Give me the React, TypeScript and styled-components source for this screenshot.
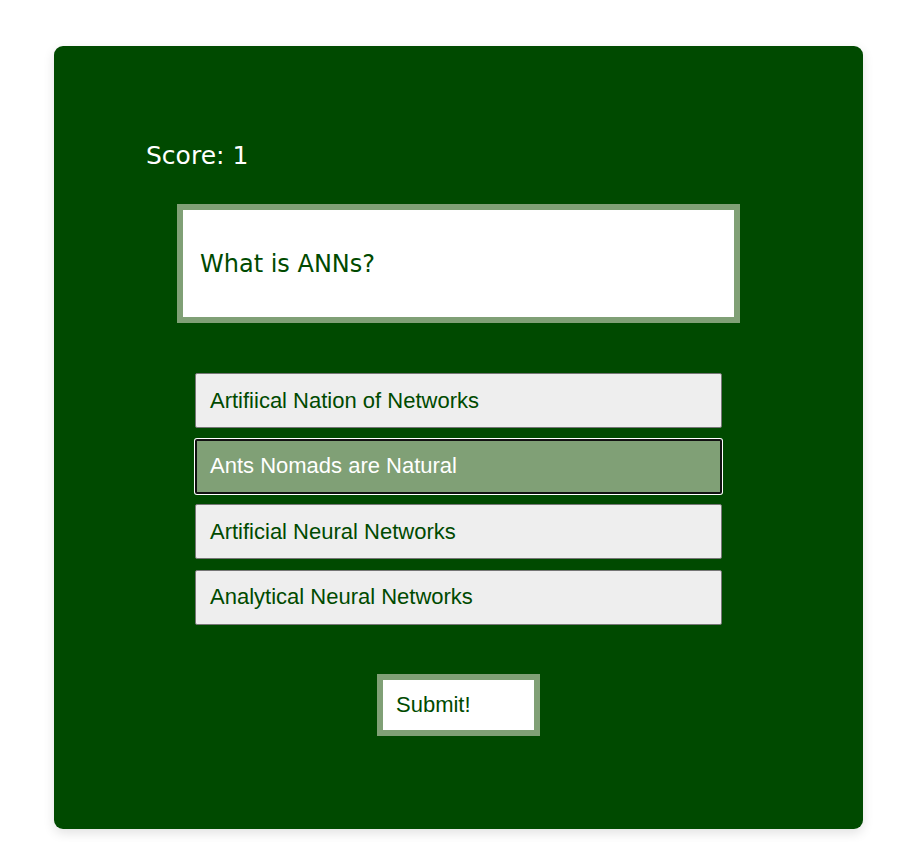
import React, { useState } from "react";
import styled, { createGlobalStyle } from "styled-components";

const Global = createGlobalStyle`
  html, body { margin: 0; padding: 0; background: #ffffff; }
  * { box-sizing: border-box; }
`;

const DARK = "#004a00";
const SAGE = "#80a076";

const Page = styled.div`
  padding: 46px 0 13px 54px;
`;

const Card = styled.div`
  width: 809px;
  background: ${DARK};
  border-radius: 9px;
  box-shadow: 0 4px 12px rgba(0, 0, 0, 0.12);
  padding: 95px 0 93px;
  display: flex;
  flex-direction: column;
  align-items: center;
`;

const Score = styled.div`
  align-self: flex-start;
  margin-left: 92px;
  font-family: "DejaVu Sans", "Noto Sans", sans-serif;
  font-size: 25px;
  line-height: 30px;
  color: #ffffff;
`;

const Question = styled.div`
  margin-top: 33px;
  width: 563px;
  height: 119px;
  border: 6px solid ${SAGE};
  background: #ffffff;
  display: flex;
  align-items: center;
  padding-left: 17px;
  font-family: "DejaVu Sans", "Noto Sans", sans-serif;
  font-size: 24px;
  color: ${DARK};
`;

const Options = styled.div`
  margin-top: 50px;
  display: flex;
  flex-direction: column;
  gap: 10.5px;
`;

const Option = styled.button<{ $selected: boolean }>`
  width: 527px;
  height: 55px;
  text-align: left;
  padding: 0 0 0 ${(p) => (p.$selected ? 13 : 14)}px;
  font-family: "Liberation Sans", Arial, sans-serif;
  font-size: 22px;
  cursor: pointer;
  border-radius: 2px;
  background: ${(p) => (p.$selected ? SAGE : "#eeeeee")};
  color: ${(p) => (p.$selected ? "#ffffff" : DARK)};
  border: ${(p) => (p.$selected ? "2px solid #111111" : "1px solid #767676")};
  box-shadow: ${(p) => (p.$selected ? "0 0 0 1px #ffffff" : "none")};
  outline: none;
`;

const Submit = styled.button`
  margin-top: 49px;
  width: 163px;
  height: 62px;
  border: 6px solid ${SAGE};
  background: #ffffff;
  text-align: left;
  padding: 0 0 0 13px;
  font-family: "Liberation Sans", Arial, sans-serif;
  font-size: 22px;
  color: ${DARK};
  cursor: pointer;
`;

const answers = [
  "Artifiical Nation of Networks",
  "Ants Nomads are Natural",
  "Artificial Neural Networks",
  "Analytical Neural Networks",
];

export default function App() {
  const [selected, setSelected] = useState(1);
  return (
    <Page>
      <Global />
      <Card>
        <Score>Score: 1</Score>
        <Question>What is ANNs?</Question>
        <Options>
          {answers.map((a, i) => (
            <Option key={a} $selected={selected === i} onClick={() => setSelected(i)}>
              {a}
            </Option>
          ))}
        </Options>
        <Submit>Submit!</Submit>
      </Card>
    </Page>
  );
}
